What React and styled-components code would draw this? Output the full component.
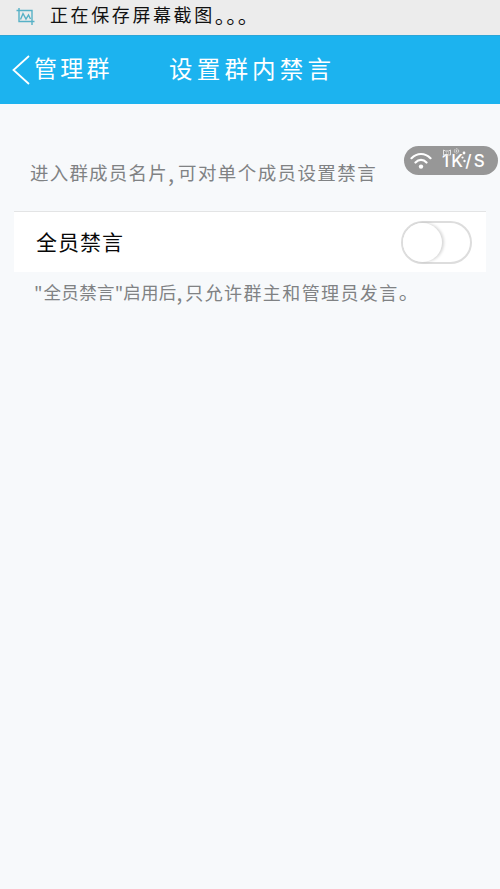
import styled, { createGlobalStyle } from "styled-components";

const GlobalStyle = createGlobalStyle`
  * {
    box-sizing: border-box;
  }

  body {
    margin: 0;
    background: #f7f9fb;
    font-family: "Noto Sans CJK SC", sans-serif;
  }
`;

const Screen = styled.div`
  width: 500px;
  height: 889px;
  overflow: hidden;
  position: relative;
  background: #f7f9fb;
`;

const StatusBar = styled.div`
  height: 35px;
  display: flex;
  align-items: center;
  padding: 0 0 7px 16px;
  background: #ececec;
  color: #111111;

  svg {
    margin: 5px 15px 0 0;
  }
`;

const Label = styled.span`
  font-size: ${({ $size }) => $size}px;
  letter-spacing: ${({ $spacing }) => $spacing || 0}px;
  margin-left: ${({ $gap }) => $gap || 0}px;
  line-height: 1;
  white-space: nowrap;
`;

const Stops = styled(Label)`
  font-feature-settings: "halt";
`;

const Header = styled.header`
  height: 69px;
  display: flex;
  align-items: center;
  padding: 0 0 6px 12px;
  background: #1cb3ef;
  border-top: 1px solid #2ba6d8;
  color: #ffffff;
`;

const BackButton = styled.button`
  width: 157px;
  display: flex;
  align-items: center;
  padding: 0;
  border: none;
  background: none;
  color: inherit;
  font-family: inherit;

  svg {
    margin-top: 5px;
  }
`;

const Title = styled.h1`
  display: flex;
  margin: 4px 0 0;
  font-weight: 400;
`;

const Hint = styled.p`
  display: flex;
  align-items: center;
  height: 20px;
  margin: ${({ $margin }) => $margin};
  color: #808284;
`;

const SettingRow = styled.div`
  height: 61px;
  display: flex;
  align-items: center;
  justify-content: space-between;
  margin: 0 14px;
  padding: 0 14px 0 22px;
  background: #ffffff;
  border-top: 1px solid #e3e4e5;
  color: #080808;

  > span {
    margin-top: -2px;
  }
`;

const Switch = styled.button`
  width: 71px;
  height: 43px;
  display: flex;
  padding: 0;
  border: 2px solid #dddddd;
  border-radius: 22px;
  background: #ffffff;
`;

const Knob = styled.span`
  width: 39px;
  height: 39px;
  border-radius: 50%;
  background: #ffffff;
  box-shadow: 2px 0 3px rgba(0, 0, 0, 0.16);
`;

const SpeedBadge = styled.div`
  position: absolute;
  top: 146px;
  left: 404px;
  width: 94px;
  height: 29px;
  display: flex;
  align-items: center;
  padding-left: 6px;
  border-radius: 15px;
  background: #979797;
  color: #ffffff;
`;

const Speed = styled.span`
  position: relative;
  margin: 2px 0 0 10px;
  font: 500 17px/1 Inter, sans-serif;
  letter-spacing: 2.2px;

  svg {
    position: absolute;
    top: -5px;
    left: 1px;
  }
`;

function ScreenshotIcon() {
  return (
    <svg width="19" height="17" viewBox="0 0 19 17" fill="none" stroke="#57b1c6" strokeWidth="1.4">
      <path d="M3 0v13.5h15.5M.5 2.5H16V17" />
      <path d="M4.5 11.5l2.5-6 3 5.5 2.5-4 2 4" />
    </svg>
  );
}

function WifiIcon() {
  return (
    <svg width="22" height="18" viewBox="0 0 22 18" fill="none" stroke="#fff" strokeWidth="2.2" strokeLinecap="round">
      <path d="M1.5 6.2C7 .6 15 .6 20.5 6.2M5.5 10.5c3.2-3.4 7.8-3.4 11 0" />
      <circle cx="11" cy="14.6" r="2.2" fill="#fff" stroke="none" />
    </svg>
  );
}

function BadgeDoodle() {
  return (
    <svg width="26" height="16" viewBox="0 0 26 16" fill="none" stroke="#e2e2e2" strokeWidth="1">
      <path d="M.5 7V2l2 1h3l2-1v5zM3 5h.8M5 5h.8" />
      <circle cx="13.5" cy="3" r="2.2" strokeDasharray="1.5 .7" />
      <circle cx="13.5" cy="3" r=".6" />
      <g fill="#fff" stroke="none">
        <circle cx="21" cy="5" r="1.4" />
        <circle cx="19.5" cy="9.5" r="1.1" />
        <circle cx="21.5" cy="13" r="1.2" />
      </g>
    </svg>
  );
}

export default function App() {
  return (
    <Screen>
      <GlobalStyle />
      <StatusBar>
        <ScreenshotIcon />
        <Label $size={18} $spacing={2.6}>正在保存屏幕截图</Label>
        <Stops $size={21} $spacing={1}>。。。</Stops>
      </StatusBar>
      <Header>
        <BackButton>
          <svg width="18" height="30" viewBox="0 0 18 30" fill="none" stroke="#fff" strokeWidth="1.8">
            <path d="M17 1L1.5 15 17 29" />
          </svg>
          <Label $size={23} $spacing={3.3} $gap={4}>管理群</Label>
        </BackButton>
        <Title>
          <Label $size={23.5} $spacing={4.2}>设置群内禁言</Label>
        </Title>
      </Header>
      <Hint $margin="58px 0 29px 30px">
        <Label $size={18.5} $spacing={1.2}>进入群成员名片</Label>
        <Label $size={22}>,</Label>
        <Label $size={18.5} $spacing={1.4} $gap={4}>可对单个成员设置禁言</Label>
      </Hint>
      <SettingRow>
        <Label $size={21} $spacing={1}>全员禁言</Label>
        <Switch role="switch" aria-checked="false">
          <Knob />
        </Switch>
      </SettingRow>
      <Hint $margin="10px 0 0 34px">
        <Label $size={18}>"</Label>
        <Label $size={17.5} $spacing={0.3} $gap={1}>全员禁言</Label>
        <Label $size={18}>"</Label>
        <Label $size={17.5} $spacing={0.2}>启用后</Label>
        <Label $size={21}>,</Label>
        <Label $size={18} $spacing={1.4} $gap={3}>只允许群主和管理员发言</Label>
        <Stops $size={20}>。</Stops>
      </Hint>
      <SpeedBadge>
        <WifiIcon />
        <Speed>
          1K/S
          <BadgeDoodle />
        </Speed>
      </SpeedBadge>
    </Screen>
  );
}
